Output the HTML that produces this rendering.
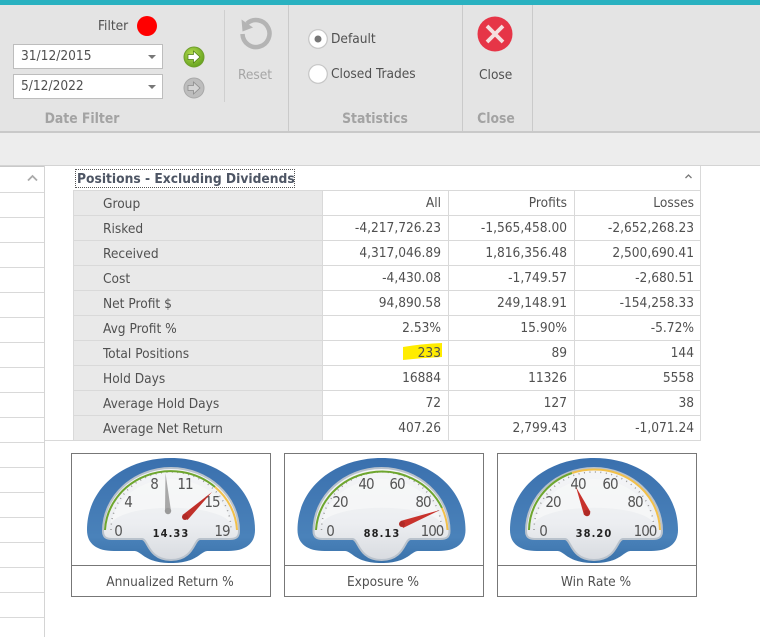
<!DOCTYPE html>
<html><head><meta charset="utf-8"><style>
html,body{margin:0;padding:0;background:#fff}
body{width:760px;height:637px;position:relative;overflow:hidden;font-family:"DejaVu Sans Condensed","DejaVu Sans","Liberation Sans",sans-serif;font-size:13.6px;color:#505050;filter:blur(.3px)}
.a{position:absolute}
.t{position:absolute;white-space:nowrap;line-height:16px}
.g{position:absolute;font-weight:bold;color:#a3a3a3;font-size:13.8px;line-height:16px;text-align:center;white-space:nowrap}
.d{position:absolute;left:13px;width:148px;height:23px;background:#fff;border:1px solid #bdbdbd;line-height:23px;text-indent:7px;color:#505050}
.d i{position:absolute;left:134px;top:10px;border:4px solid transparent;border-top-color:#777;border-bottom:0}
.r{position:absolute;height:1px;background:#d9d9d9}
.v{position:absolute;width:1px;background:#d9d9d9}
.c{position:absolute;white-space:nowrap;line-height:16px;text-align:right;width:120px}
.l{position:absolute;left:103px;white-space:nowrap;line-height:16px}
.b{position:absolute;width:198px;height:142px;border:1px solid #777;box-sizing:content-box}
.cap{position:absolute;text-align:center;width:198px;line-height:16px;top:574px;color:#505050}
svg text{font-family:"DejaVu Sans Condensed","DejaVu Sans","Liberation Sans",sans-serif}
</style></head><body>
<div class="a" style="left:0;top:0;width:760px;height:5px;background:#29b1c0"></div>
<div class="a" style="left:0;top:5px;width:760px;height:126px;background:#e4e4e4"></div>
<div class="a" style="left:0;top:131px;width:760px;height:2px;background:#c9c9c9"></div>
<div class="a" style="left:0;top:133px;width:760px;height:32px;background:#ededed"></div>
<div class="a" style="left:0;top:165px;width:760px;height:1px;background:#d4d4d4"></div>
<div class="v" style="left:224px;top:10px;height:92px;background:#cfcfcf"></div>
<div class="v" style="left:288px;top:5px;height:126px;background:#cacaca"></div>
<div class="v" style="left:462px;top:5px;height:126px;background:#cacaca"></div>
<div class="v" style="left:532px;top:5px;height:126px;background:#cacaca"></div>

<div class="t" style="left:98px;top:18px">Filter</div>
<div class="a" style="left:137px;top:16px;width:20px;height:20px;border-radius:50%;background:#f00"></div>
<div class="d" style="top:44px">31/12/2015<i></i></div>
<div class="d" style="top:74px">5/12/2022<i></i></div>
<svg class="a" style="left:183px;top:46px" width="22" height="54" viewBox="0 0 22 54">
<defs><radialGradient id="gr" cx=".4" cy=".35" r=".7"><stop offset="0" stop-color="#b4dc50"/><stop offset="1" stop-color="#62a01c"/></radialGradient></defs>
<circle cx="11" cy="11" r="10" fill="url(#gr)" stroke="#6f9e2c"/>
<path d="M5 8.500h5.500V5L17 11l-6.500 6v-3.500H5z" fill="#fff" stroke="#4a7a14" stroke-width=".7"/>
<circle cx="11" cy="42" r="10" fill="#bdbdbd" stroke="#a8a8a8"/>
<path d="M5 39.500h5.500V36L17 42l-6.500 6v-3.500H5z" fill="#d4d4d4" stroke="#8c8c8c" stroke-width=".8"/>
</svg>
<svg class="a" style="left:239px;top:17px" width="34" height="34" viewBox="0 0 34 34">
<path d="M8 6.500A13.500 13.500 0 1 1 3.500 17" fill="none" stroke="#b4b4b4" stroke-width="4.500"/>
<path d="M2.500 2.500L3.500 14.500 14 10.500z" fill="#b4b4b4"/>
</svg>
<div class="t" style="left:238px;top:67px;color:#a5a5a5">Reset</div>
<div class="g" style="left:40px;top:111px;width:84px">Date Filter</div>

<svg class="a" style="left:306px;top:27px" width="24" height="60" viewBox="0 0 24 60">
<circle cx="12" cy="12" r="9.300" fill="#fff" stroke="#c6c6c6" stroke-width="1.200"/><circle cx="12" cy="12" r="3.500" fill="#777"/>
<circle cx="12" cy="47" r="9.300" fill="#fff" stroke="#c6c6c6" stroke-width="1.200"/>
</svg>
<div class="t" style="left:331px;top:31px">Default</div>
<div class="t" style="left:331px;top:66px">Closed Trades</div>
<div class="g" style="left:335px;top:111px;width:80px">Statistics</div>

<svg class="a" style="left:477px;top:16px" width="36" height="36" viewBox="0 0 36 36">
<circle cx="18" cy="18" r="17.500" fill="#e63547"/>
<path d="M10 10L26 26M26 10L10 26" stroke="#f5dede" stroke-width="3.800"/>
</svg>
<div class="t" style="left:479px;top:67px">Close</div>
<div class="g" style="left:470px;top:111px;width:52px">Close</div>

<!-- left panel -->
<div class="v" style="left:44px;top:166px;height:471px;background:#d4d4d4"></div>
<div class="r" style="left:0;top:166px;width:44px;background:#c9c9c9"></div>
<div class="r" style="left:0;top:192px;width:44px"></div>
<div class="r" style="left:0;top:217px;width:44px"></div>
<div class="r" style="left:0;top:242px;width:44px"></div>
<div class="r" style="left:0;top:267px;width:44px"></div>
<div class="r" style="left:0;top:292px;width:44px"></div>
<div class="r" style="left:0;top:317px;width:44px"></div>
<div class="r" style="left:0;top:342px;width:44px"></div>
<div class="r" style="left:0;top:367px;width:44px"></div>
<div class="r" style="left:0;top:392px;width:44px"></div>
<div class="r" style="left:0;top:417px;width:44px"></div>
<div class="r" style="left:0;top:442px;width:44px"></div>
<div class="r" style="left:0;top:467px;width:44px"></div>
<div class="r" style="left:0;top:492px;width:44px"></div>
<div class="r" style="left:0;top:517px;width:44px"></div>
<div class="r" style="left:0;top:542px;width:44px"></div>
<div class="r" style="left:0;top:567px;width:44px"></div>
<div class="r" style="left:0;top:592px;width:44px"></div>
<div class="r" style="left:0;top:617px;width:44px"></div>
<svg class="a" style="left:27px;top:174px" width="12" height="8"><path d="M1 6.500L5.500 2 10 6.500" fill="none" stroke="#aaa" stroke-width="1.800"/></svg>
<svg class="a" style="left:684px;top:173px" width="10" height="7"><path d="M1.500 5L4.500 2 7.500 5" fill="none" stroke="#777" stroke-width="1.300"/></svg>

<!-- table -->
<div class="a" style="left:73px;top:191px;width:249px;height:250px;background:#e9e9e9"></div>
<div class="a" style="left:75px;top:169px;width:220px;height:19px;border:1px dotted #555;box-sizing:border-box"></div>
<div class="t" style="left:77px;top:171px;font-weight:bold;color:#4d5564;font-size:13.7px">Positions - Excluding Dividends</div>
<div class="r" style="left:73px;top:190px;width:628px"></div>
<div class="r" style="left:73px;top:215px;width:628px"></div>
<div class="r" style="left:73px;top:240px;width:628px"></div>
<div class="r" style="left:73px;top:265px;width:628px"></div>
<div class="r" style="left:73px;top:290px;width:628px"></div>
<div class="r" style="left:73px;top:315px;width:628px"></div>
<div class="r" style="left:73px;top:340px;width:628px"></div>
<div class="r" style="left:73px;top:365px;width:628px"></div>
<div class="r" style="left:73px;top:390px;width:628px"></div>
<div class="r" style="left:73px;top:415px;width:628px"></div>
<div class="r" style="left:45px;top:440px;width:656px"></div>
<div class="v" style="left:73px;top:190px;height:250px"></div>
<div class="v" style="left:322px;top:190px;height:250px"></div>
<div class="v" style="left:448px;top:190px;height:250px"></div>
<div class="v" style="left:574px;top:190px;height:250px"></div>
<div class="v" style="left:700px;top:166px;height:275px"></div>
<svg class="a" style="left:400px;top:342px" width="44" height="20"><path d="M3 5Q20 2 42 1L42 15Q20 16 3 18z" fill="#ffec00"/></svg>

<div class="l" style="top:196px">Group</div>
<div class="l" style="top:221px">Risked</div>
<div class="l" style="top:246px">Received</div>
<div class="l" style="top:271px">Cost</div>
<div class="l" style="top:296px">Net Profit $</div>
<div class="l" style="top:321px">Avg Profit %</div>
<div class="l" style="top:346px">Total Positions</div>
<div class="l" style="top:371px">Hold Days</div>
<div class="l" style="top:396px">Average Hold Days</div>
<div class="l" style="top:421px">Average Net Return</div>

<div class="c" style="left:321px;top:195px">All</div><div class="c" style="left:447px;top:195px">Profits</div><div class="c" style="left:574px;top:195px">Losses</div>
<div class="c" style="left:321px;top:220px">-4,217,726.23</div><div class="c" style="left:447px;top:220px">-1,565,458.00</div><div class="c" style="left:574px;top:220px">-2,652,268.23</div>
<div class="c" style="left:321px;top:245px">4,317,046.89</div><div class="c" style="left:447px;top:245px">1,816,356.48</div><div class="c" style="left:574px;top:245px">2,500,690.41</div>
<div class="c" style="left:321px;top:270px">-4,430.08</div><div class="c" style="left:447px;top:270px">-1,749.57</div><div class="c" style="left:574px;top:270px">-2,680.51</div>
<div class="c" style="left:321px;top:295px">94,890.58</div><div class="c" style="left:447px;top:295px">249,148.91</div><div class="c" style="left:574px;top:295px">-154,258.33</div>
<div class="c" style="left:321px;top:320px">2.53%</div><div class="c" style="left:447px;top:320px">15.90%</div><div class="c" style="left:574px;top:320px">-5.72%</div>
<div class="c" style="left:321px;top:345px">233</div><div class="c" style="left:447px;top:345px">89</div><div class="c" style="left:574px;top:345px">144</div>
<div class="c" style="left:321px;top:370px">16884</div><div class="c" style="left:447px;top:370px">11326</div><div class="c" style="left:574px;top:370px">5558</div>
<div class="c" style="left:321px;top:395px">72</div><div class="c" style="left:447px;top:395px">127</div><div class="c" style="left:574px;top:395px">38</div>
<div class="c" style="left:321px;top:420px">407.26</div><div class="c" style="left:447px;top:420px">2,799.43</div><div class="c" style="left:574px;top:420px">-1,071.24</div>

<!-- gauge boxes -->
<div class="b" style="left:71px;top:453px"></div><div class="r" style="left:71px;top:565px;width:200px;background:#777"></div>
<div class="b" style="left:284px;top:453px"></div><div class="r" style="left:284px;top:565px;width:200px;background:#777"></div>
<div class="b" style="left:497px;top:453px"></div><div class="r" style="left:497px;top:565px;width:200px;background:#777"></div>
<div class="cap" style="left:71px">Annualized Return %</div>
<div class="cap" style="left:284px">Exposure %</div>
<div class="cap" style="left:497px">Win Rate %</div>

<svg class="a" style="left:0;top:0" width="760" height="637" viewBox="0 0 760 637">
<defs>
<linearGradient id="bl" x1="0" y1="0" x2="0" y2="1"><stop offset="0" stop-color="#3a70ae"/><stop offset=".75" stop-color="#4a82ba"/><stop offset="1" stop-color="#3a72aa"/></linearGradient>
<linearGradient id="fc" x1="0" y1="0" x2="0" y2="1"><stop offset="0" stop-color="#f4f5f7"/><stop offset=".6" stop-color="#eceef1"/><stop offset="1" stop-color="#d8dbe0"/></linearGradient>
<symbol id="body" viewBox="0 0 760 637" width="760" height="637" overflow="visible">
<path d="M87 530C87 487 125 458 171 458C217 458 255 487 255 530C255 544 245 551 228 551H208C200 551 198 563 171 563C144 563 142 551 134 551H114C97 551 87 544 87 530Z" fill="url(#bl)"/>
<path d="M103 531C103 496 134 468 171 468C208 468 239 496 239 531C239 537 236 539 230 539H200C194 539 194 560 171 560C148 560 148 539 142 539H112C106 539 103 537 103 531Z" fill="url(#fc)" stroke="#b9c2cc" stroke-width="2"/>
<path d="M110 525A62 56 0 0 1 232 525C222 502 120 502 110 525Z" fill="#f6f7f8" opacity=".8"/>
<path d="M111 530A60 58 0 0 1 231 530" fill="none" stroke="#999" stroke-width="1.500" stroke-dasharray="1 4.500"/>
</symbol>
</defs>

<use href="#body"/>
<path d="M105 530A66 62 0 0 1 215 487" fill="none" stroke="#6ea62e" stroke-width="2"/>
<path d="M215 487A66 62 0 0 1 237 530" fill="none" stroke="#f2c04a" stroke-width="2"/>
<g font-size="15" fill="#555" text-anchor="middle" letter-spacing="-1">
<text x="118" y="536">0</text><text x="128" y="507">4</text><text x="154" y="489">8</text><text x="185" y="489">11</text><text x="212" y="507">15</text><text x="222" y="536">19</text>
</g>
<text x="171" y="537" font-size="11" font-weight="bold" fill="#222" text-anchor="middle" letter-spacing="1.100">14.33</text>
<path d="M165.500 473L171 511L165 511Z" fill="#a8a8a8"/><circle cx="168" cy="511" r="3.200" fill="#9a9a9a"/>
<path d="M212 492L187.500 520L182.500 515Z" fill="#c0302a"/><circle cx="185" cy="517" r="3" fill="#b02a26"/>

<g transform="translate(210.500 0)"><use href="#body"/></g>
<path d="M316 530A66 62 0 0 1 442 508" fill="none" stroke="#6ea62e" stroke-width="2"/>
<path d="M442 508A66 62 0 0 1 447.500 530" fill="none" stroke="#f2c04a" stroke-width="2"/>
<g font-size="15" fill="#555" text-anchor="middle" letter-spacing="-1">
<text x="330" y="536">0</text><text x="340" y="507">20</text><text x="366" y="489">40</text><text x="397" y="489">60</text><text x="423" y="507">80</text><text x="432" y="536">100</text>
</g>
<text x="382" y="537" font-size="11" font-weight="bold" fill="#222" text-anchor="middle" letter-spacing="1.100">88.13</text>
<path d="M440 510L403 528L400.500 521Z" fill="#c8322c"/><circle cx="402" cy="524" r="3" fill="#b02a26"/>

<g transform="translate(423 0)"><use href="#body"/></g>
<path d="M529 530A66 62 0 0 1 572 473" fill="none" stroke="#6ea62e" stroke-width="2"/>
<path d="M572 473A66 62 0 0 1 660 530" fill="none" stroke="#f2c04a" stroke-width="2"/>
<g font-size="15" fill="#555" text-anchor="middle" letter-spacing="-1">
<text x="543" y="536">0</text><text x="553" y="507">20</text><text x="578" y="489">40</text><text x="610" y="489">60</text><text x="635" y="507">80</text><text x="645" y="536">100</text>
</g>
<text x="594" y="537" font-size="11" font-weight="bold" fill="#222" text-anchor="middle" letter-spacing="1.100">38.20</text>
<path d="M576 487L590.500 512L584 515Z" fill="#c8322c"/><circle cx="587" cy="513" r="3.200" fill="#b02a26"/>
</svg>
</body></html>
